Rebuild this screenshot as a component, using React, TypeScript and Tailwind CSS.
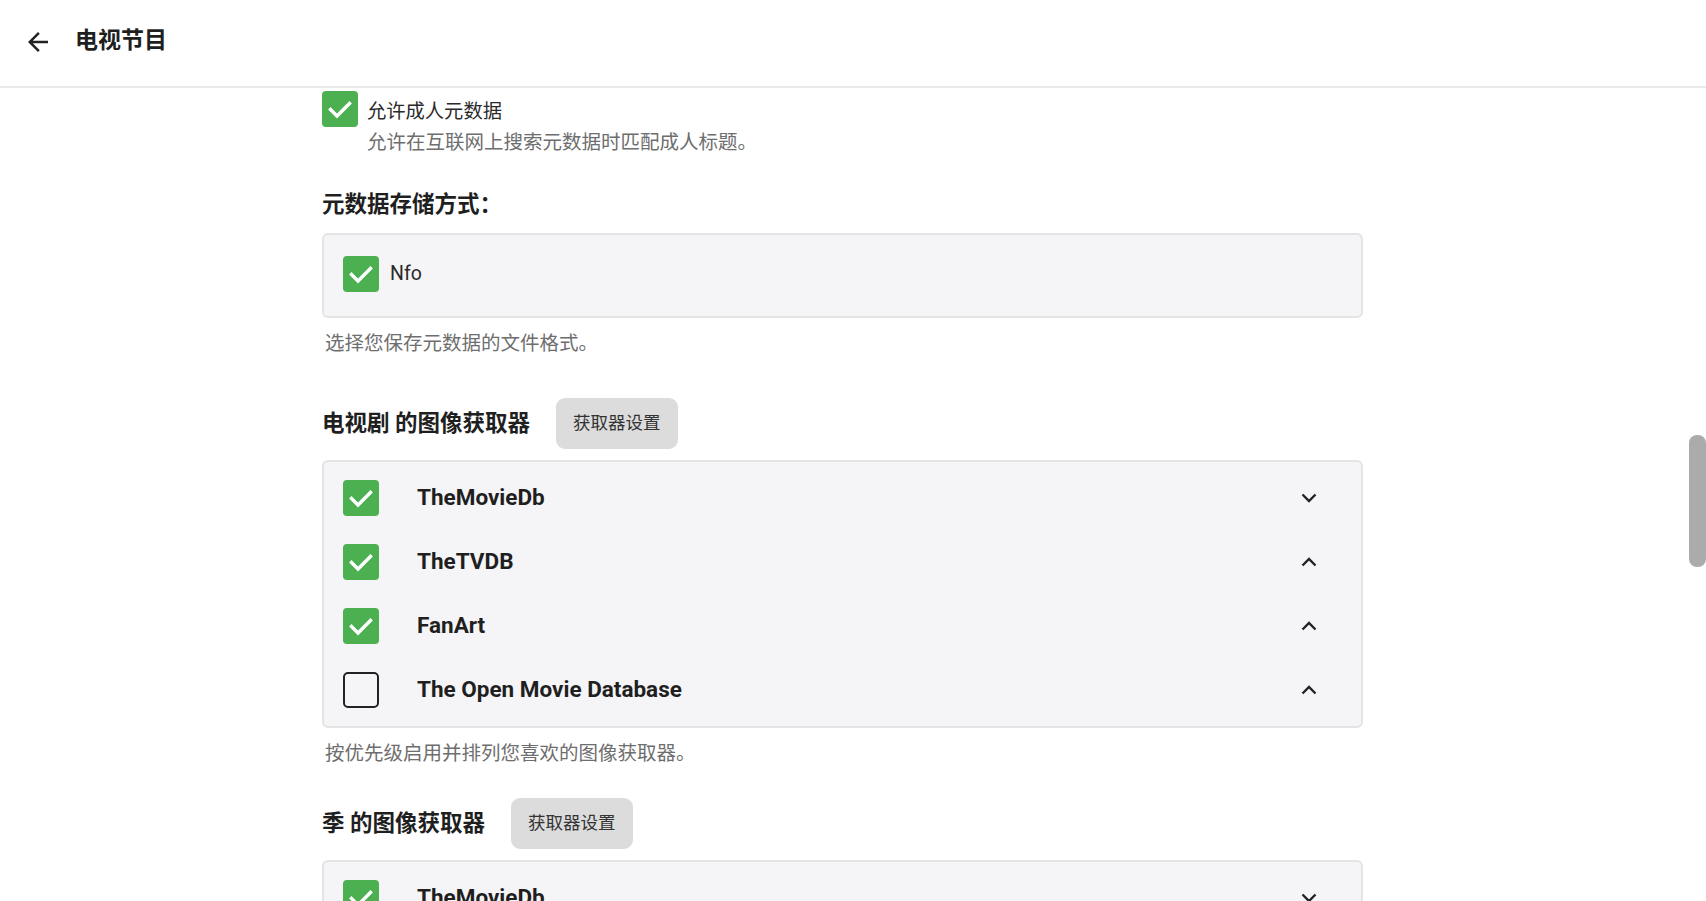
const font = { fontFamily: '"Roboto", "Noto Sans CJK SC", sans-serif' }

type Fetcher = { name: string; enabled: boolean; open: boolean }

const seriesFetchers: Fetcher[] = [
  { name: 'TheMovieDb', enabled: true, open: false },
  { name: 'TheTVDB', enabled: true, open: true },
  { name: 'FanArt', enabled: true, open: true },
  { name: 'The Open Movie Database', enabled: false, open: true },
]

const seasonFetchers: Fetcher[] = [
  { name: 'TheMovieDb', enabled: true, open: false },
  { name: 'TheTVDB', enabled: true, open: true },
]

function CheckBox({ checked }: { checked: boolean }) {
  if (!checked) {
    return <div className="w-[36px] h-[36px] shrink-0 rounded-[5px] border-[2.5px] border-[#222]" />
  }
  return (
    <div className="w-[36px] h-[36px] shrink-0 rounded-[4px] bg-[#4caf50]">
      <svg width="36" height="36" viewBox="0 0 36 36" fill="none">
        <path d="M8.5 18.5 L15 25 L27.5 12.5" stroke="#fff" strokeWidth="3.4" strokeLinecap="square" />
      </svg>
    </div>
  )
}

function Chevron({ up }: { up: boolean }) {
  return (
    <svg width="16" height="10" viewBox="0 0 16 10" fill="none">
      <path d={up ? 'M1.5 8.5 L8 2 L14.5 8.5' : 'M1.5 1.5 L8 8 L14.5 1.5'} stroke="#222" strokeWidth="2.4" />
    </svg>
  )
}

function FetcherSection({ title, items }: { title: string; items: Fetcher[] }) {
  return (
    <>
      <div className="flex items-center gap-[26px] h-[51px] mt-[39px]">
        <h2 className="text-[22.5px] font-bold text-[#1f1f1f]">{title}</h2>
        <button className="h-[51px] px-[17px] rounded-[9px] bg-[#dcdcdc] text-[17.5px] text-[#333]">获取器设置</button>
      </div>
      <div className="mt-[11px] rounded-[6px] border-2 border-[#e4e4e4] bg-[#f5f5f7] py-[4px]">
        {items.map((f) => (
          <div key={f.name} className="flex items-center h-[64px] pl-[19px] pr-[44px]">
            <CheckBox checked={f.enabled} />
            <span className="ml-[38px] flex-1 text-[22.5px] font-bold text-[#1f1f1f]">{f.name}</span>
            <Chevron up={f.open} />
          </div>
        ))}
      </div>
    </>
  )
}

export default function App() {
  return (
    <div className="relative h-screen overflow-hidden bg-white flex flex-col" style={font}>
      <header className="h-[88px] shrink-0 flex items-center pb-[3px] pl-[23px] border-b-2 border-[#ebebeb]">
        <svg width="30" height="30" viewBox="0 0 24 24" fill="#222">
          <path d="M20 11H7.83l5.59-5.59L12 4l-8 8 8 8 1.41-1.41L7.83 13H20v-2z" />
        </svg>
        <h1 className="ml-[22px] text-[23px] font-bold text-[#1f1f1f]">电视节目</h1>
      </header>

      <main className="flex-1 overflow-hidden">
        <div className="ml-[322px] w-[1041px] pt-[3px]">
          <div className="flex gap-[9px]">
            <CheckBox checked />
            <div>
              <p className="mt-[6px] text-[19.3px] leading-[30px] text-[#2a2a2a]">允许成人元数据</p>
              <p className="text-[19.5px] leading-[32px] text-[#6e6e6e]">允许在互联网上搜索元数据时匹配成人标题。</p>
            </div>
          </div>

          <h2 className="mt-[30px] text-[22.5px] leading-[30px] font-bold text-[#1f1f1f]">元数据存储方式：</h2>
          <div className="mt-[14px] rounded-[6px] border-2 border-[#e4e4e4] bg-[#f5f5f7] pt-[21px] pb-[24px] pl-[19px] flex items-center gap-[11px]">
            <CheckBox checked />
            <span className="text-[19.5px] text-[#2a2a2a]">Nfo</span>
          </div>
          <p className="mt-[11px] ml-[3px] text-[19.5px] leading-[30px] text-[#6e6e6e]">选择您保存元数据的文件格式。</p>

          <FetcherSection title="电视剧 的图像获取器" items={seriesFetchers} />
          <p className="mt-[11px] ml-[3px] text-[19.5px] leading-[30px] text-[#6e6e6e]">按优先级启用并排列您喜欢的图像获取器。</p>

          <div className="-mt-[10px]">
            <FetcherSection title="季 的图像获取器" items={seasonFetchers} />
          </div>
        </div>
      </main>

      <div className="absolute right-0 top-[435px] w-[17px] h-[132px] rounded-[8px] bg-[#ababab]" />
    </div>
  )
}
